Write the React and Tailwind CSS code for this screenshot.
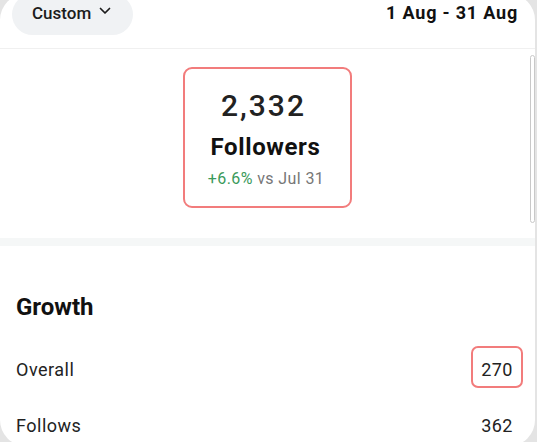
import React from "react";

export default function App() {
  return (
    <div className="w-[537px] h-[442px] bg-[#e4e4e4] overflow-hidden font-['Roboto',sans-serif] text-[#1c1c1c]">
      <div className="relative -mt-[6px] w-[535px] h-[452px] bg-white rounded-[26px] overflow-hidden">
        {/* header */}
        <div className="flex items-start justify-between h-[55px] border-b border-[#f0f0f0]">
          <div className="ml-[12px] h-[41px] w-[121px] rounded-full bg-[#f0f2f4] flex items-center pl-[20px] gap-[8px] pb-[4px]">
            <span className="text-[17px] leading-[20px] font-medium text-[#1c1c1c]">Custom</span>
            <svg width="12" height="8" viewBox="0 0 12 8" fill="none" className="mt-[-3px]">
              <path d="M1.5 1.5 L6 6 L10.5 1.5" stroke="#1c1c1c" strokeWidth="1.7" strokeLinecap="round" strokeLinejoin="round" />
            </svg>
          </div>
          <div className="h-[41px] flex items-center pb-[4px] pr-[17px] text-[18px] leading-[22px] font-bold tracking-[0.8px] text-[#111]">
            1 Aug - 31 Aug
          </div>
        </div>

        {/* followers card */}
        <div className="flex justify-center pt-[18px] pb-[30px]">
          <div className="w-[169px] h-[141px] border-2 border-[#f27c7c] rounded-[9px] flex flex-col items-center pt-[19px]">
            <div className="mr-[8px] text-[30px] leading-[36px] font-medium text-[#222] tracking-[2px]">2,332</div>
            <div className="mr-[4px] mt-[9px] text-[24px] leading-[28px] font-bold tracking-[0.6px] text-[#111]">Followers</div>
            <div className="mr-[3px] mt-[8px] text-[16px] leading-[20px] tracking-[0.4px]">
              <span className="text-[#3a9a5b]">+6.6%</span>
              <span className="text-[#777]"> vs Jul 31</span>
            </div>
          </div>
        </div>

        <div className="h-[8px] bg-[#f5f7f7]"></div>

        {/* growth */}
        <div className="pl-[16px] pr-[22px]">
          <div className="mt-[46px] text-[24px] leading-[30px] font-bold text-[#111]">Growth</div>
          <div className="mt-[36px] flex justify-between text-[18px] leading-[24px] text-[#222] tracking-[0.5px]">
            <span>Overall</span>
            <span className="relative">
              270
              <span className="absolute -left-[10px] -right-[10px] -top-[12px] -bottom-[6px] border-2 border-[#f27c7c] rounded-[7px]"></span>
            </span>
          </div>
          <div className="mt-[32px] flex justify-between text-[18px] leading-[24px] text-[#222] tracking-[0.5px]">
            <span>Follows</span>
            <span>362</span>
          </div>
        </div>

        {/* scrollbar */}
        <div className="absolute left-[530px] top-[61px] w-[5px] h-[168px] border border-[#c8c8c8] rounded-full"></div>
      </div>
    </div>
  );
}
